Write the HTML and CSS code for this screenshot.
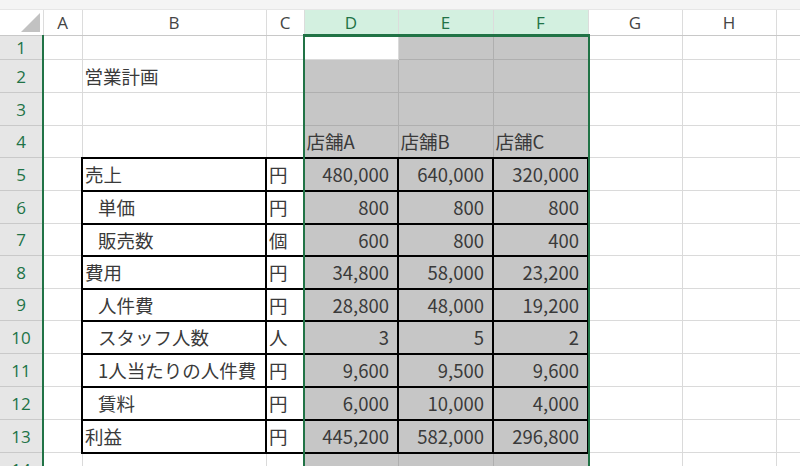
FILE: index.html
```html
<!DOCTYPE html>
<html lang="ja">
<head>
<meta charset="utf-8">
<title>営業計画</title>
<link rel="stylesheet" href="styles.css">
</head>
<body>
<div class="topbar"></div>
<div class="sheet">
  <table class="grid">
    <colgroup>
      <col class="c-head"><col class="c-a"><col class="c-b"><col class="c-c"><col class="c-d"><col class="c-e"><col class="c-f"><col class="c-g"><col class="c-h"><col class="c-i">
    </colgroup>
    <thead>
      <tr class="r-colhead">
        <th class="corner"><svg width="43" height="25" viewBox="0 0 43 25"><polygon points="21,22 40,22 40,3" fill="#c2c2c2"/></svg></th>
        <th>A</th><th>B</th><th>C</th>
        <th class="on">D</th><th class="on">E</th><th class="on">F</th>
        <th>G</th><th>H</th><th></th>
      </tr>
    </thead>
    <tbody>
      <tr class="h24">
        <th>1</th><td></td><td></td><td></td>
        <td></td><td class="s"></td><td class="s"></td><td></td><td></td><td></td>
      </tr>
      <tr>
        <th>2</th><td></td><td>営業計画</td><td></td>
        <td class="s"></td><td class="s"></td><td class="s"></td><td></td><td></td><td></td>
      </tr>
      <tr>
        <th>3</th><td></td><td></td><td></td>
        <td class="s"></td><td class="s"></td><td class="s"></td><td></td><td></td><td></td>
      </tr>
      <tr class="h32">
        <th>4</th><td></td><td></td><td></td>
        <td class="s">店舗A</td><td class="s">店舗B</td><td class="s">店舗C</td><td></td><td></td><td></td>
      </tr>
      <tr>
        <th>5</th><td></td><td class="bx">売上</td><td class="bx">円</td>
        <td class="s bx n">480,000</td><td class="s bx n">640,000</td><td class="s bx n">320,000</td><td></td><td></td><td></td>
      </tr>
      <tr>
        <th>6</th><td></td><td class="bx in">単価</td><td class="bx">円</td>
        <td class="s bx n">800</td><td class="s bx n">800</td><td class="s bx n">800</td><td></td><td></td><td></td>
      </tr>
      <tr class="h32">
        <th>7</th><td></td><td class="bx in">販売数</td><td class="bx">個</td>
        <td class="s bx n">600</td><td class="s bx n">800</td><td class="s bx n">400</td><td></td><td></td><td></td>
      </tr>
      <tr>
        <th>8</th><td></td><td class="bx">費用</td><td class="bx">円</td>
        <td class="s bx n">34,800</td><td class="s bx n">58,000</td><td class="s bx n">23,200</td><td></td><td></td><td></td>
      </tr>
      <tr class="h32">
        <th>9</th><td></td><td class="bx in">人件費</td><td class="bx">円</td>
        <td class="s bx n">28,800</td><td class="s bx n">48,000</td><td class="s bx n">19,200</td><td></td><td></td><td></td>
      </tr>
      <tr>
        <th>10</th><td></td><td class="bx in">スタッフ人数</td><td class="bx">人</td>
        <td class="s bx n">3</td><td class="s bx n">5</td><td class="s bx n">2</td><td></td><td></td><td></td>
      </tr>
      <tr>
        <th>11</th><td></td><td class="bx in">1人当たりの人件費</td><td class="bx">円</td>
        <td class="s bx n">9,600</td><td class="s bx n">9,500</td><td class="s bx n">9,600</td><td></td><td></td><td></td>
      </tr>
      <tr>
        <th>12</th><td></td><td class="bx in">賃料</td><td class="bx">円</td>
        <td class="s bx n">6,000</td><td class="s bx n">10,000</td><td class="s bx n">4,000</td><td></td><td></td><td></td>
      </tr>
      <tr>
        <th>13</th><td></td><td class="bx">利益</td><td class="bx">円</td>
        <td class="s bx n">445,200</td><td class="s bx n">582,000</td><td class="s bx n">296,800</td><td></td><td></td><td></td>
      </tr>
      <tr>
        <th>14</th><td></td><td></td><td></td>
        <td class="s"></td><td class="s"></td><td class="s"></td><td></td><td></td><td></td>
      </tr>
    </tbody>
  </table>
  <!-- selected range D:F -->
  <div class="selection"></div>
</div>
</body>
</html>
```

FILE: styles.css
```css
* {
    box-sizing: border-box;
}

body {
    margin: 0;
    background: #fff;
    overflow: hidden;
    font-family: "Noto Sans CJK JP", sans-serif;
}

.topbar {
    height: 10px;
    background: #f4f4f4;
    border-bottom: 1px solid #e6e6e6;
}

.sheet {
    position: relative;
}

.grid {
    table-layout: fixed;
    border-collapse: collapse;
    width: 816px;
}

.c-head { width: 43px; }
.c-a { width: 39px; }
.c-b { width: 184px; }
.c-c { width: 38px; }
.c-d { width: 94px; }
.c-e { width: 95px; }
.c-f { width: 95px; }
.c-g { width: 94px; }
.c-h { width: 94px; }
.c-i { width: 40px; }

/* column letters */
thead th {
    height: 25px;
    padding: 0;
    background: #fff;
    color: #444;
    font: 17px "Open Sans", sans-serif;
    border-right: 1px solid #dcdcdc;
    border-bottom: 1px solid #c8c8c8;
}

thead th.on {
    background: #d3f0e0;
    color: #217346;
    border-bottom: 2px solid #217346;
}

thead th.corner svg {
    display: block;
}

/* row numbers */
tbody th {
    padding: 0;
    background: #e6e6e6;
    color: #217346;
    font: 17px "Open Sans", sans-serif;
    text-align: center;
    border-right: 2px solid #217346;
    border-bottom: 1px solid #c9c9c9;
}

tbody tr {
    height: 33px;
}

tbody tr.h24 { height: 24px; }
tbody tr.h32 { height: 32px; }

td {
    padding: 0 2px;
    font-size: 18.5px;
    line-height: 20px;
    color: #3a3a3a;
    white-space: nowrap;
    overflow: hidden;
    border-right: 1px solid #dadada;
    border-bottom: 1px solid #dadada;
}

td.s {
    background: #c6c6c6;
    border-color: #afafaf;
}

td.bx {
    border: 2px solid #000;
}

td.n {
    text-align: right;
    padding-right: 8px;
}

td.in {
    padding-left: 15px;
}

.selection {
    position: absolute;
    left: 303px;
    top: 24px;
    width: 287px;
    height: 480px;
    border: 2px solid #217346;
    pointer-events: none;
}
```
